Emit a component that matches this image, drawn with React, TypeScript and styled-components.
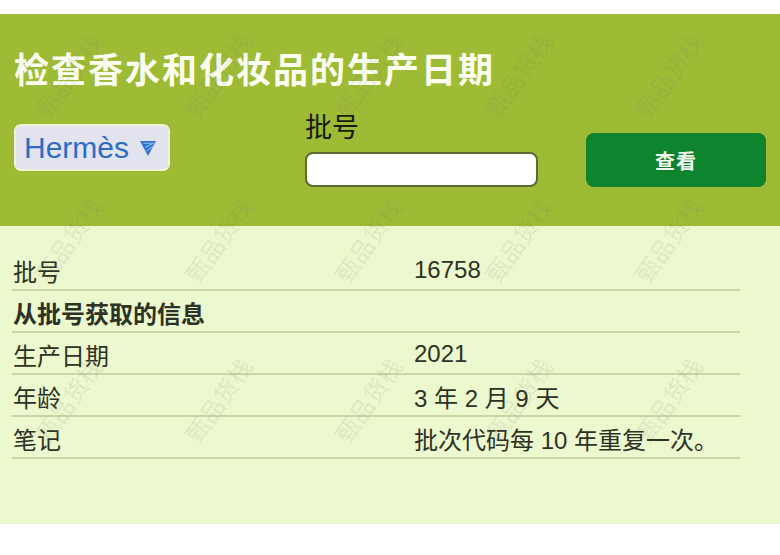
import styled, { createGlobalStyle } from "styled-components";

const GlobalStyle = createGlobalStyle`
    html, body {
        margin: 0;
        padding: 0;
        background: #ffffff;
    }
    body {
        font-family: "Noto Sans CJK SC", "Noto Sans", "Liberation Sans", sans-serif;
    }
`;

const Page = styled.div`
    position: relative;
    width: 780px;
    height: 555px;
    padding-top: 14px;
    box-sizing: border-box;
    overflow: hidden;
    background: #ffffff;
`;

const Header = styled.header`
    background: #9ebb35;
    padding: 33px 14px 39px 14px;
    display: flex;
    flex-direction: column;
    gap: 22px;
`;

const Title = styled.h1`
    margin: 0;
    font-size: 35px;
    line-height: 42px;
    font-weight: 700;
    letter-spacing: 2px;
    color: #fbfdf0;
`;

const Controls = styled.div`
    display: flex;
    align-items: flex-start;
`;

const Select = styled.div`
    width: 156px;
    height: 47px;
    margin-top: 13px;
    box-sizing: border-box;
    border: 2px solid #f4f2d6;
    border-radius: 7px;
    background: #e3e2ef;
    display: flex;
    align-items: center;
    padding-left: 8px;
    gap: 10px;
    font-family: "Liberation Sans", Arial, sans-serif;
    font-size: 30px;
    color: #2c6dc3;
`;

const Field = styled.div`
    display: flex;
    flex-direction: column;
    gap: 12px;
    width: 233px;
    margin-left: 135px;
`;

const Label = styled.label`
    font-size: 27px;
    line-height: 29px;
    color: #161a10;
`;

const Input = styled.input`
    height: 35px;
    box-sizing: border-box;
    border: 2px solid #5c6a33;
    border-radius: 8px;
    background: #ffffff;
    outline: none;
`;

const Button = styled.button`
    width: 180px;
    height: 54px;
    margin-top: 22px;
    margin-left: 48px;
    border: none;
    border-radius: 8px;
    background: #0f842f;
    color: #f4f8ee;
    font-family: "Noto Sans CJK SC", sans-serif;
    font-size: 20px;
    font-weight: 700;
    letter-spacing: 1px;
`;

const Results = styled.section`
    background: #ecf8cd;
    padding: 23px 40px 65px 12px;
`;

const Row = styled.div`
    display: grid;
    grid-template-columns: 401px 1fr;
    height: 42px;
    box-sizing: border-box;
    align-items: center;
    border-bottom: 2px solid #c9d6a6;
    font-family: "Liberation Sans", "Noto Sans CJK SC", sans-serif;
    font-size: 24px;
    color: #2d3225;
`;

const Cell = styled.span<{ $bold?: boolean }>`
    padding-left: 1px;
    padding-top: 2px;
    font-weight: ${props => (props.$bold ? 700 : 400)};
    white-space: nowrap;
`;

const Watermarks = styled.div`
    position: absolute;
    inset: 0;
    pointer-events: none;
`;

const Mark = styled.span`
    position: absolute;
    font-size: 24px;
    line-height: 30px;
    color: rgba(110, 110, 110, 0.13);
    transform: rotate(-55deg);
    white-space: nowrap;
`;

function Caret() {
    return (
        <svg width="18" height="18" viewBox="0 0 17 17">
            <path d="M1 2 L16 2 L8.5 16 Z" fill="#2f72cf" />
            <path d="M4 4 L13 4 M6 8 L14 3.5 M7 11.5 L14.5 6" stroke="#8cb8f0" strokeWidth="1" />
        </svg>
    );
}

const rows = [
    { key: "批号", value: "16758" },
    { key: "从批号获取的信息", value: "", bold: true },
    { key: "生产日期", value: "2021" },
    { key: "年龄", value: "3 年 2 月 9 天" },
    { key: "笔记", value: "批次代码每 10 年重复一次。" },
];

const marks: [number, number][] = [];
for (const y of [60, 225, 385]) {
    for (const x of [20, 170, 320, 470, 620]) {
        marks.push([x, y]);
    }
}

export default function App() {
    return (
        <Page>
            <GlobalStyle />
            <Header>
                <Title>检查香水和化妆品的生产日期</Title>
                <Controls>
                    <Select>
                        Hermès <Caret />
                    </Select>
                    <Field>
                        <Label>批号</Label>
                        <Input />
                    </Field>
                    <Button>查看</Button>
                </Controls>
            </Header>
            <Results>
                {rows.map(r => (
                    <Row key={r.key}>
                        <Cell $bold={r.bold}>{r.key}</Cell>
                        <Cell>{r.value}</Cell>
                    </Row>
                ))}
            </Results>
            <Watermarks>
                {marks.map(([x, y]) => (
                    <Mark key={`${x}-${y}`} style={{ left: x, top: y }}>甄品货栈</Mark>
                ))}
            </Watermarks>
        </Page>
    );
}
